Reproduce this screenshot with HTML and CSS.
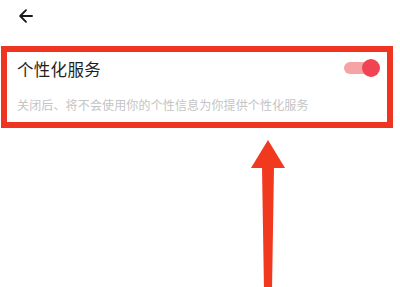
FILE: index.html
```html
<!DOCTYPE html>
<html lang="zh">
<head>
<meta charset="utf-8">
<link rel="stylesheet" href="styles.css">
</head>
<body>
<div class="page">
  <header class="topbar">
    <svg class="back" width="16" height="16" viewBox="0 0 16 16">
      <path d="M14 8H2.5M8 2.2L2.2 8L8 13.8" fill="none" stroke="#1a1a1a" stroke-width="1.9" stroke-linecap="round" stroke-linejoin="round"/>
    </svg>
  </header>
  <section class="highlight">
    <div class="row">
      <div class="title">个性化服务</div>
      <div class="toggle"><span class="knob"></span></div>
    </div>
    <div class="desc">关闭后、将不会使用你的个性信息为你提供个性化服务</div>
  </section>
  <svg class="pointer" width="40" height="150" viewBox="0 0 40 150">
    <polygon points="17,0 0,28 34,28" fill="#f0391e"/>
    <polygon points="11,27 23,27 21,150 13,150" fill="#f0391e"/>
  </svg>
</div>
</body>
</html>
```
FILE: styles.css
```css
html, body {
  margin: 0;
  padding: 0;
  background: #ffffff;
}
.page {
  position: relative;
  width: 400px;
  height: 287px;
  overflow: hidden;
  font-family: "Noto Sans CJK SC", "Noto Sans", sans-serif;
}
.topbar {
  height: 46px;
  display: flex;
  align-items: flex-start;
  padding: 8px 0 0 18px;
  box-sizing: border-box;
}
.back {
  display: block;
}
.highlight {
  width: 392px;
  margin-left: 1px;
  box-sizing: border-box;
  border: 6px solid #ef3521;
  height: 82px;
  padding: 3px 10px 0 10px;
}
.row {
  display: flex;
  align-items: center;
  justify-content: space-between;
  height: 28px;
}
.title {
  font-size: 16.5px;
  color: #1f1f1f;
  letter-spacing: 0.3px;
}
.toggle {
  position: relative;
  width: 32px;
  height: 12px;
  border-radius: 6px;
  background: #f6a3a6;
  margin-right: 1px;
  margin-top: -2px;
}
.knob {
  position: absolute;
  right: -4px;
  top: -3px;
  width: 18px;
  height: 18px;
  border-radius: 50%;
  background: #f04452;
}
.desc {
  margin-top: 13px;
  font-size: 12px;
  color: #c4c4c4;
  letter-spacing: 0.15px;
}
.pointer {
  position: absolute;
  left: 251px;
  top: 140px;
}
```
